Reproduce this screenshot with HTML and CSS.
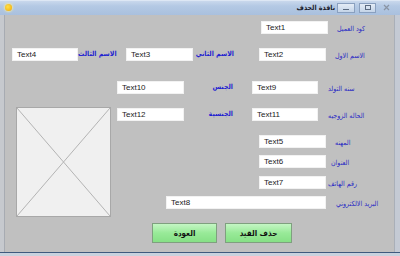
FILE: index.html
```html
<!DOCTYPE html>
<html lang="ar">
<head>
  <meta charset="UTF-8">
  <title>نافذة الحذف</title>
  <meta name="viewport" content="width=device-width, initial-scale=1.0">
  <link rel="stylesheet" href="styles.css">
</head>
<body>

<div class="window">
  <div class="titlebar">
    <span class="app-icon"></span>
    <div class="title-right">
      <span class="title-text">نافذة الحذف</span>
      <span class="tb-btn tb-min"><span class="dash"></span></span>
      <span class="tb-btn tb-max"><span class="sq"></span></span>
      <svg class="tb-close" width="7" height="7" viewBox="0 0 7 7">
        <path d="M1 1 L6 6 M6 1 L1 6" stroke="#8a94a4" stroke-width="1.2"/>
      </svg>
    </div>
  </div>

  <div class="client">
    <div class="row row-a">
      <div class="field t1">Text1</div>
      <div class="lbl l-a">كود العميل</div>
    </div>

    <div class="row row-b">
      <div class="field t4">Text4</div>
      <div class="lbl bold l-third">الاسم الثالث</div>
      <div class="field t3">Text3</div>
      <div class="lbl bold l-second">الاسم الثاني</div>
      <div class="field t2">Text2</div>
      <div class="lbl l-b">الاسم الاول</div>
    </div>

    <div class="row row-c">
      <div class="field t10">Text10</div>
      <div class="lbl bold l-mid">الجنس</div>
      <div class="field t9">Text9</div>
      <div class="lbl l-c">سنه التولد</div>
    </div>

    <div class="lower">
      <div class="photo">
        <svg width="95" height="110" viewBox="0 0 95 110">
          <rect x="0.5" y="0.5" width="94" height="109" fill="#f0f0f0" stroke="#a8a8a8"/>
          <line x1="1" y1="1" x2="94" y2="109" stroke="#b4b4b4" stroke-width="1"/>
          <line x1="94" y1="1" x2="1" y2="109" stroke="#b4b4b4" stroke-width="1"/>
        </svg>
      </div>

      <div class="col">
        <div class="row row-d">
          <div class="field t12">Text12</div>
          <div class="lbl bold l-mid">الجنسية</div>
          <div class="field t11">Text11</div>
          <div class="lbl l-c">الحاله الزوجيه</div>
        </div>
        <div class="row row-e">
          <div class="field t5">Text5</div>
          <div class="lbl l-e">المهنه</div>
        </div>
        <div class="row row-f">
          <div class="field t5">Text6</div>
          <div class="lbl l-f">العنوان</div>
        </div>
        <div class="row row-g">
          <div class="field t5">Text7</div>
          <div class="lbl l-g">رقم الهاتف</div>
        </div>
        <div class="row row-h">
          <div class="field t8">Text8</div>
          <div class="lbl l-h">البريد الالكتروني</div>
        </div>
      </div>
    </div>

    <div class="buttons">
      <button class="btn btn-back">العودة</button>
      <button class="btn btn-delete">حذف القيد</button>
    </div>
  </div>

  <div class="frame-bottom"></div>
</div>

</body>
</html>
```

FILE: styles.css
```css
body { margin: 0; background: #c0c0c0; font-family: "Liberation Sans", Arial, sans-serif; }

.window { width: 400px; height: 256px; overflow: hidden; }

/* title bar */
.titlebar {
  height: 15px;
  display: flex;
  align-items: center;
  justify-content: space-between;
  background: linear-gradient(#cddbee, #b4c9e4 40%, #a9c0de);
  box-shadow: inset 0 1px #dde7f4;
}
.app-icon {
  width: 7px;
  height: 7px;
  margin-left: 5px;
  border-radius: 50%;
  background: radial-gradient(circle at 40% 40%, #ffe04a, #f0a800);
  box-shadow: 0 0 2px 1px #e8e4b0;
}
.title-right { display: flex; align-items: center; }
.title-text {
  font-family: "DejaVu Sans Condensed", "DejaVu Sans", sans-serif;
  font-size: 7px;
  font-weight: bold;
  color: #1a1a2a;
  margin-right: 2px;
}
.tb-btn {
  height: 8px;
  border: 1px solid #8aa0bf;
  background: linear-gradient(#e4ecf6, #c4d4e8);
  display: flex;
  align-items: center;
  justify-content: center;
}
.tb-min { width: 16px; margin-right: 4px; }
.tb-max { width: 15px; }
.dash { width: 6px; height: 1px; background: #5a6a80; margin-top: 3px; }
.sq { width: 4px; height: 3px; border: 1px solid #5a6a80; }
.tb-close { display: block; margin-left: 7px; margin-right: 10px; }

/* client area */
.client {
  height: 237px;
  overflow: hidden;
  background: #c0c0c0;
  box-shadow: inset 4px 0 #c6c9ce, inset 5px 0 #a7abb2, inset -5px 0 #c4cad4, inset -6px 0 #a9afb8;
}
.row { display: flex; align-items: center; height: 13px; }

.field {
  height: 13px;
  box-sizing: border-box;
  width: 67px;
  background: #fff;
  border: 1px solid #f2f2f2;
  font-size: 8px;
  line-height: 11px;
  padding-left: 4px;
  color: #222;
}

.lbl {
  font-family: "DejaVu Sans Condensed", "DejaVu Sans", sans-serif;
  font-size: 7px;
  color: #2a2ac4;
  white-space: nowrap;
  margin-top: 3px;
}
.lbl.bold {
  font-size: 7px;
  font-weight: bold;
  color: #1f1fd0;
  text-align: right;
  margin-top: -2px;
}

.row-a { margin-top: 6px; }
.t1 { margin-left: 261px; }
.l-a { margin-left: 9px; }

.row-b { margin-top: 14px; }
.t4 { margin-left: 12px; width: 66px; }
.l-third { width: 34px; }
.t3 { margin-left: 14px; }
.l-second { width: 41px; }
.t2 { margin-left: 25px; }
.l-b { margin-left: 9px; }

.row-c { margin-top: 20px; }
.t10 { margin-left: 117px; }
.l-mid { width: 49px; }
.t9 { margin-left: 19px; width: 66px; }
.l-c { margin-left: 10px; }

/* photo + right column */
.lower { display: flex; margin-top: 13px; height: 110px; }
.photo { margin-left: 16px; width: 95px; height: 110px; }
.photo svg { display: block; }
.col { padding-top: 1px; }

.t12 { margin-left: 6px; }
.t11 { margin-left: 19px; width: 66px; }

.row-e { margin-top: 14px; }
.t5 { margin-left: 148px; }
.l-e { margin-left: 9px; }
.row-f { margin-top: 7px; }
.l-f { margin-left: 5px; }
.row-g { margin-top: 8px; }
.l-g { margin-left: 2px; }
.row-h { margin-top: 7px; }
.t8 { margin-left: 55px; width: 160px; }
.l-h { margin-left: 10px; }

/* buttons */
.buttons { display: flex; margin-top: 6px; margin-left: 152px; gap: 8px; }
.btn {
  height: 20px;
  padding: 0;
  border: 1px solid #7fa07f;
  background: linear-gradient(#c4f6c4, #98ea98 50%, #86e086);
  font-family: "DejaVu Sans Condensed", "DejaVu Sans", sans-serif;
  font-size: 8px;
  font-weight: bold;
  color: #111;
}
.btn-back { width: 65px; }
.btn-delete { width: 67px; }

.frame-bottom {
  height: 4px;
  background: #c8d2de;
  border-top: 1px solid #3e5a7e;
  box-sizing: border-box;
}
```
